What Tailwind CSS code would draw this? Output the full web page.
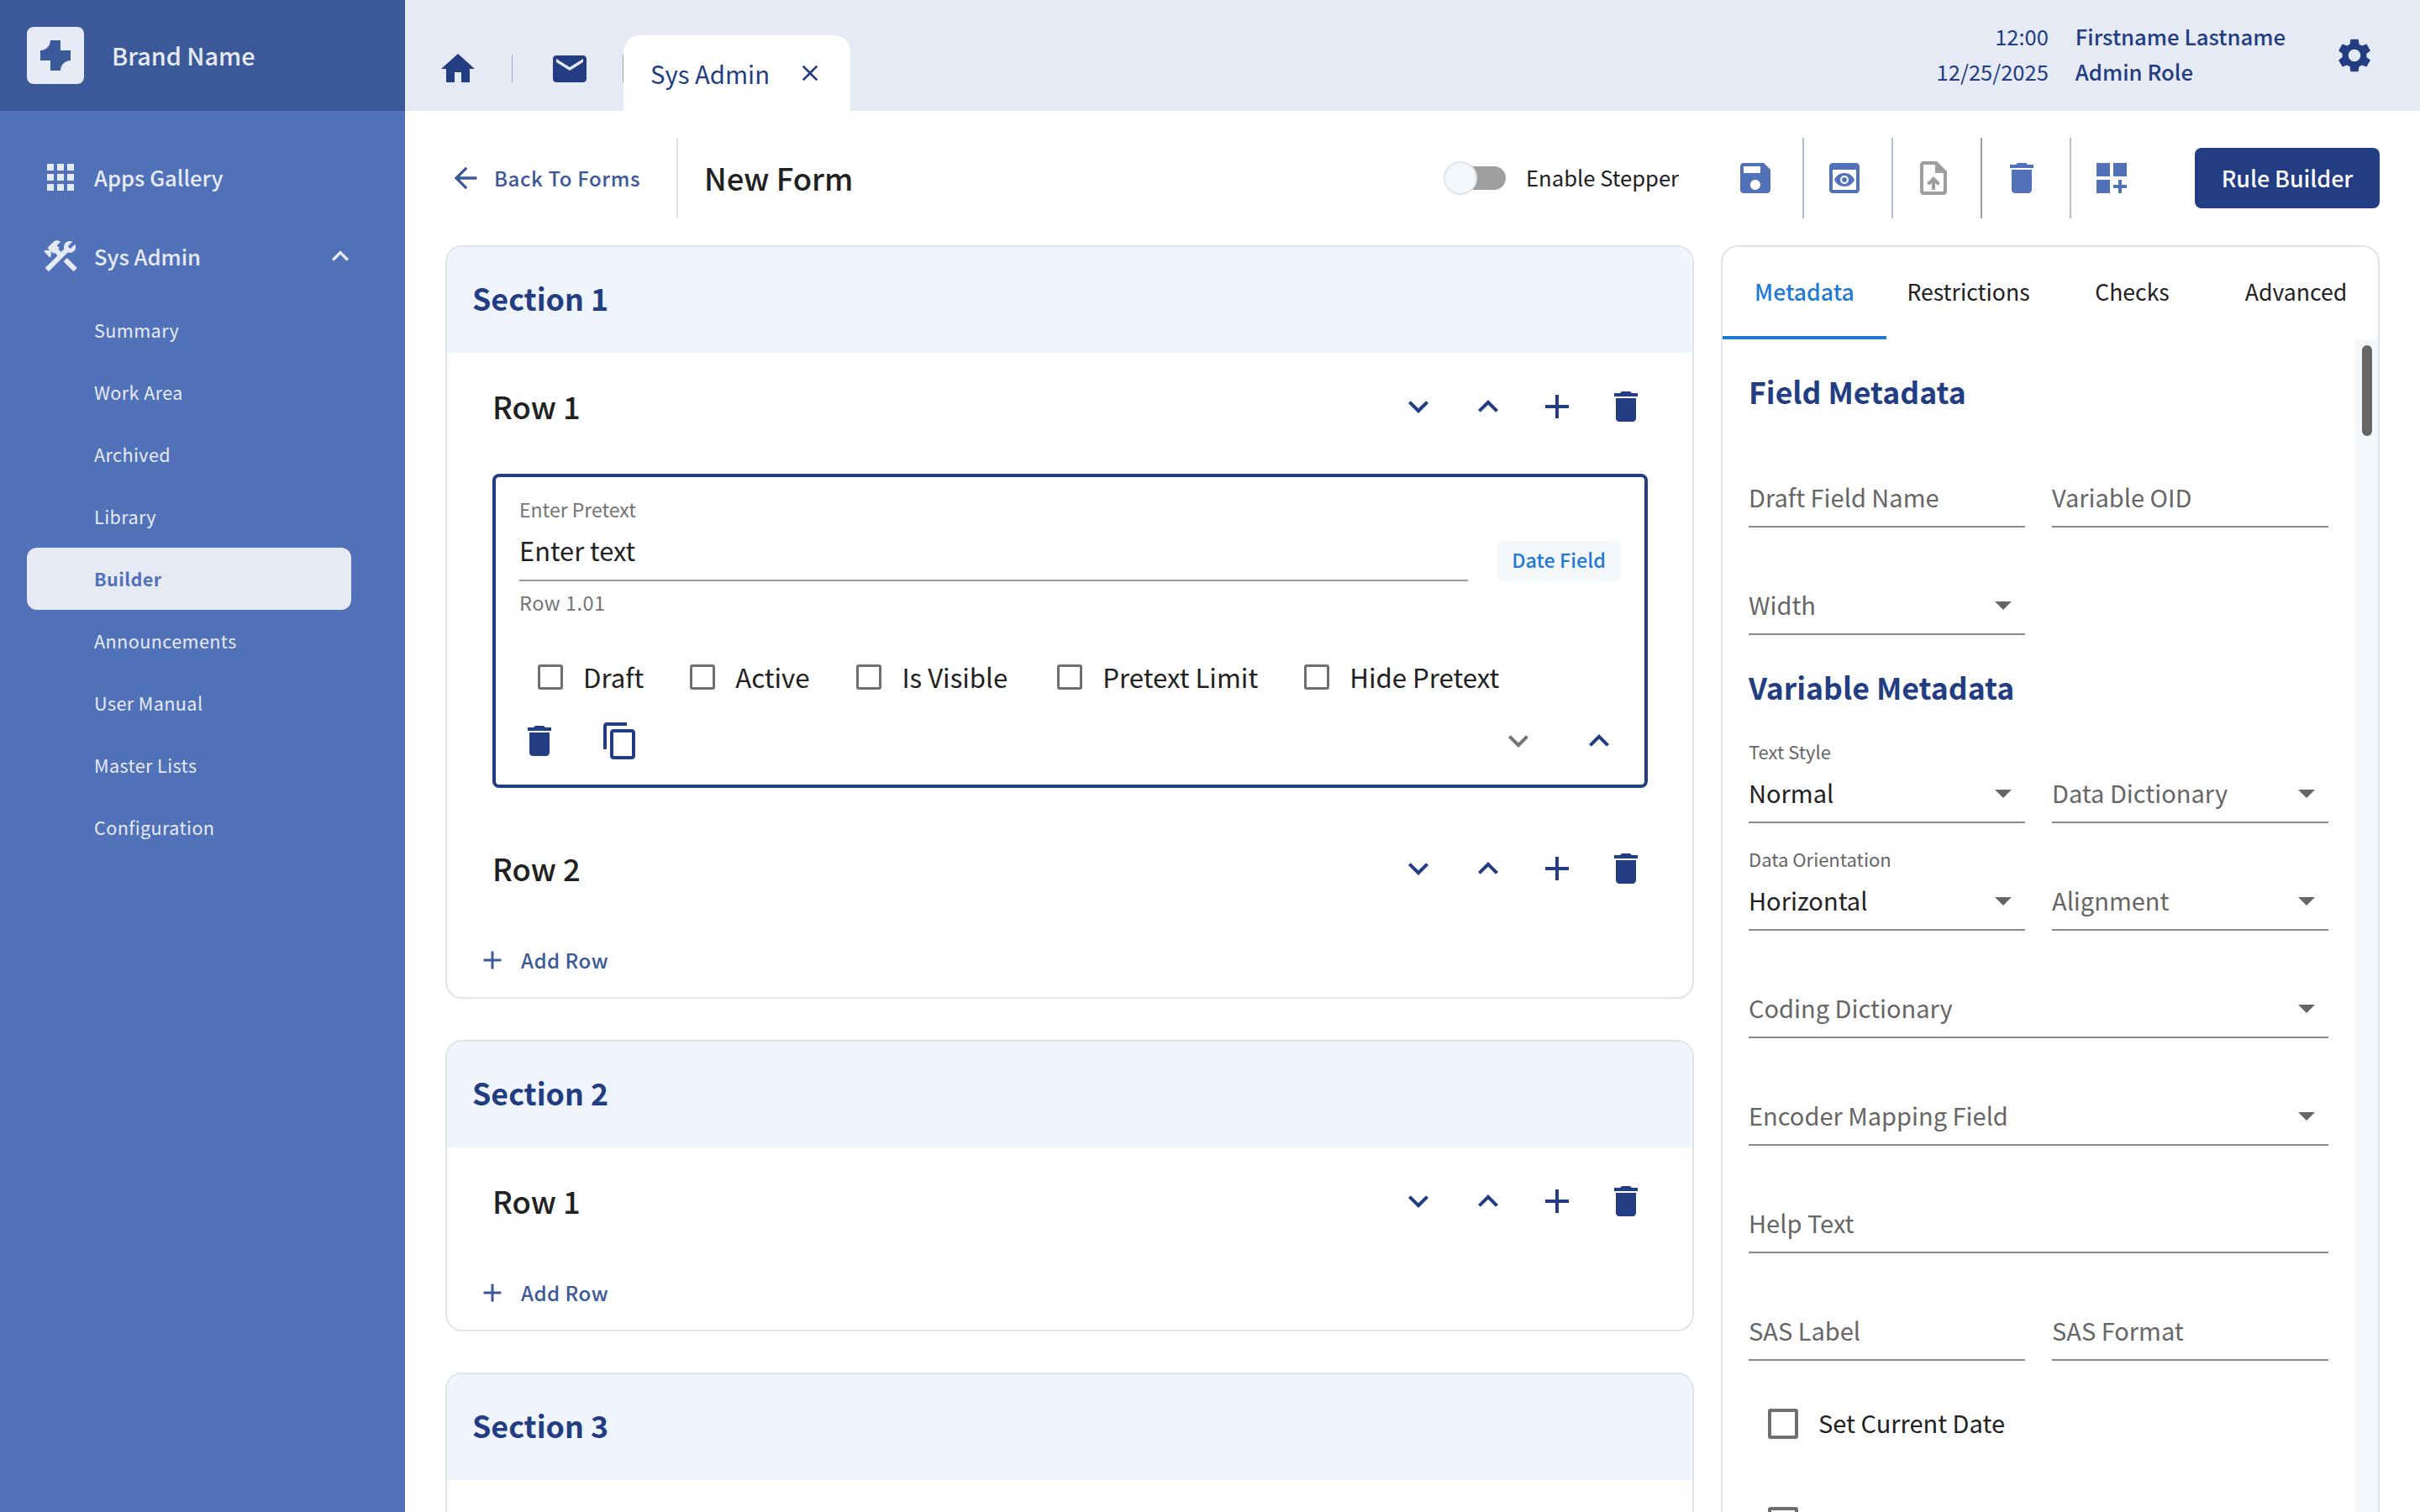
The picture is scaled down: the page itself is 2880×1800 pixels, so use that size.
<!DOCTYPE html>
<html lang="en">

<head>
    <meta charset="UTF-8">
    <title>New Form</title>
    <script src="https://cdn.jsdelivr.net/npm/@tailwindcss/browser@4"></script>
</head>

<body class="bg-white font-['Noto_Sans_CJK_SC',sans-serif] text-[#212121]">
    <!-- shared icons -->
    <svg class="hidden">
        <symbol id="i-down" viewBox="0 0 24 24"><path d="M16.59 8.59L12 13.17 7.41 8.59 6 10l6 6 6-6z"/></symbol>
        <symbol id="i-up" viewBox="0 0 24 24"><path d="M12 8l-6 6 1.41 1.41L12 10.83l4.59 4.58L18 14z"/></symbol>
        <symbol id="i-plus" viewBox="0 0 24 24"><path d="M19 13h-6v6h-2v-6H5v-2h6V5h2v6h6v2z"/></symbol>
        <symbol id="i-trash" viewBox="0 0 24 24"><path d="M6 19c0 1.1.9 2 2 2h8c1.1 0 2-.9 2-2V7H6v12zM19 4h-3.5l-1-1h-5l-1 1H5v2h14V4z"/></symbol>
        <symbol id="i-drop" viewBox="0 0 24 24"><path d="M7 10l5 5 5-5z"/></symbol>
    </svg>

    <div class="flex h-[1800px] w-[2880px] overflow-hidden">
        <!-- Sidebar -->
        <aside class="w-[482px] shrink-0 bg-[#5171b8] text-[#e6eaf5]">
            <div class="flex h-[132px] items-center gap-[33px] bg-[#3b5998] pl-[32px]">
                <div class="flex h-[68px] w-[68px] items-center justify-center rounded-[8px] bg-[#e6eaf5]">
                    <svg class="h-[36px] w-[36px] fill-[#3b5998]" viewBox="0 0 36 36"><path d="M0 12A12 12 0 0 0 12 0H24V12H36V24A12 12 0 0 0 24 36H12V24H0Z"/></svg>
                </div>
                <span class="text-[28.8px] leading-[40px] font-medium">Brand Name</span>
            </div>
            <nav class="pt-[40px]">
                <div class="flex h-[78px] items-center gap-[16px] pl-[48px]">
                    <svg class="h-[48px] w-[48px] fill-current" viewBox="0 0 24 24"><path d="M4 8h4V4H4v4zm6 12h4v-4h-4v4zm-6 0h4v-4H4v4zm0-6h4v-4H4v4zm6 0h4v-4h-4v4zm6-10v4h4V4h-4zm-6 4h4V4h-4v4zm6 6h4v-4h-4v4zm0 6h4v-4h-4v4z"/></svg>
                    <span class="text-[25.6px] leading-[36px] font-medium">Apps Gallery</span>
                </div>
                <div class="mt-[16px] flex h-[78px] items-center gap-[16px] pl-[48px]">
                    <svg class="h-[48px] w-[48px] fill-current" viewBox="0 0 24 24"><path d="M13.783 15.172l2.121-2.121 5.996 5.996-2.121 2.121zM17.5 10c1.93 0 3.5-1.57 3.5-3.5 0-.58-.16-1.12-.41-1.6l-2.7 2.7-1.49-1.49 2.7-2.7c-.48-.25-1.02-.41-1.6-.41C15.57 3 14 4.57 14 6.5c0 .41.08.8.21 1.16l-1.85 1.85-1.78-1.78.71-.71-1.41-1.41L12 3.49c-1.17-1.17-3.07-1.17-4.24 0L4.22 7.03l1.41 1.41H2.81l-.71.71 3.54 3.54.71-.71V9.15l1.41 1.41.71-.71 1.78 1.78-7.41 7.41 2.12 2.12L16.34 9.79c.36.13.75.21 1.16.21z"/></svg>
                    <span class="w-[127px] text-[25.6px] leading-[36px] font-medium whitespace-nowrap">Sys Admin</span>
                    <svg class="ml-[130px] h-[40px] w-[40px] fill-current" viewBox="0 0 24 24"><use href="#i-up"/></svg>
                </div>
                <ul class="mt-[12px] text-[21.6px] tracking-[0.4px]">
                    <li class="flex h-[74px] items-center pl-[112px]">Summary</li>
                    <li class="flex h-[74px] items-center pl-[112px]">Work Area</li>
                    <li class="flex h-[74px] items-center pl-[112px]">Archived</li>
                    <li class="flex h-[74px] items-center pl-[112px]">Library</li>
                    <li class="ml-[32px] flex h-[74px] w-[386px] items-center rounded-[12px] bg-[#e6eaf5] pl-[80px] font-bold text-[#5171b8]">Builder</li>
                    <li class="flex h-[74px] items-center pl-[112px]">Announcements</li>
                    <li class="flex h-[74px] items-center pl-[112px]">User Manual</li>
                    <li class="flex h-[74px] items-center pl-[112px]">Master Lists</li>
                    <li class="flex h-[74px] items-center pl-[112px]">Configuration</li>
                </ul>
            </nav>
        </aside>

        <main class="flex min-w-0 flex-1 flex-col">
            <!-- Header -->
            <header class="flex h-[132px] shrink-0 items-end bg-[#e6eaf5] text-[#223d82]">
                <svg class="mb-[26px] ml-[39px] h-[48px] w-[48px] fill-current" viewBox="0 0 24 24"><path d="M10 20v-6h4v6h5v-8h3L12 3 2 12h3v8z"/></svg>
                <div class="mb-[34px] ml-[40px] h-[33px] w-px bg-[#9aa6c4]"></div>
                <svg class="mb-[26px] ml-[44px] h-[48px] w-[48px] fill-current" viewBox="0 0 24 24"><path d="M20 4H4c-1.1 0-1.99.9-1.99 2L2 18c0 1.1.9 2 2 2h16c1.1 0 2-.9 2-2V6c0-1.1-.9-2-2-2zm0 4l-8 5-8-5V6l8 5 8-5v2z"/></svg>
                <div class="mb-[34px] ml-[39px] h-[33px] w-px bg-[#9aa6c4]"></div>
                <div class="flex h-[90px] w-[270px] items-center rounded-t-[20px] bg-white pl-[32px]">
                    <span class="text-[29.3px] leading-[44px]">Sys Admin</span>
                    <svg class="ml-[32px] h-[32px] w-[32px] fill-current" viewBox="0 0 24 24"><path d="M19 6.41L17.59 5 12 10.59 6.41 5 5 6.41 10.59 12 5 17.59 6.41 19 12 13.41 17.59 19 19 17.59 13.41 12z"/></svg>
                </div>
                <div class="ml-auto flex h-[132px] items-center">
                    <div class="mb-[4px] text-right text-[25.5px] leading-[42px]">
                        <div>12:00</div>
                        <div>12/25/2025</div>
                    </div>
                    <div class="mb-[4px] ml-[32px] text-[25.7px] leading-[42px] font-medium">
                        <div>Firstname Lastname</div>
                        <div>Admin Role</div>
                    </div>
                    <svg class="mr-[54px] ml-[58px] h-[48px] w-[48px] fill-current" viewBox="0 0 24 24"><path d="M19.14 12.94c.04-.3.06-.61.06-.94 0-.32-.02-.64-.07-.94l2.03-1.58c.18-.14.23-.41.12-.61l-1.92-3.32c-.12-.22-.37-.29-.59-.22l-2.39.96c-.5-.38-1.03-.7-1.62-.94l-.36-2.54c-.04-.24-.24-.41-.48-.41h-3.84c-.24 0-.43.17-.47.41l-.36 2.54c-.59.24-1.13.57-1.62.94l-2.39-.96c-.22-.08-.47 0-.59.22L2.74 8.87c-.12.21-.08.47.12.61l2.03 1.58c-.05.3-.09.63-.09.94s.02.64.07.94l-2.03 1.58c-.18.14-.23.41-.12.61l1.92 3.32c.12.22.37.29.59.22l2.39-.96c.5.38 1.03.7 1.62.94l.36 2.54c.05.24.24.41.48.41h3.84c.24 0 .44-.17.47-.41l.36-2.54c.59-.24 1.13-.56 1.62-.94l2.39.96c.22.08.47 0 .59-.22l1.92-3.32c.12-.22.07-.47-.12-.61l-2.01-1.58zM12 15.6c-1.98 0-3.6-1.62-3.6-3.6s1.62-3.6 3.6-3.6 3.6 1.62 3.6 3.6-1.62 3.6-3.6 3.6z"/></svg>
                </div>
            </header>

            <!-- Toolbar -->
            <div class="flex h-[160px] shrink-0 items-center pr-[48px] pl-[52px]">
                <svg class="h-[40px] w-[40px] fill-[#3b5998]" viewBox="0 0 24 24"><path d="M20 11H7.83l5.59-5.59L12 4l-8 8 8 8 1.41-1.41L7.83 13H20v-2z"/></svg>
                <span class="ml-[14px] w-[172px] text-[24px] leading-[32px] font-medium tracking-[0.6px] whitespace-nowrap text-[#3b5998]">Back To Forms</span>
                <div class="ml-[45px] h-[96px] w-[2px] bg-[#e0e0e0]"></div>
                <h1 class="ml-[31px] pb-[2px] text-[36.4px] leading-[50px] font-medium">New Form</h1>

                <div class="ml-auto flex items-center">
                    <div class="relative h-[40px] w-[74px]">
                        <div class="absolute top-[6px] right-0 h-[28px] w-[60px] rounded-full bg-[#9e9e9e]"></div>
                        <div class="absolute top-0 left-0 h-[40px] w-[40px] rounded-full border-2 border-[#e0e4e8] bg-[#f5f8fa]"></div>
                    </div>
                    <span class="ml-[24px] pb-[3px] text-[25.6px] leading-[40px]">Enable Stepper</span>
                    <svg class="ml-[67px] h-[48px] w-[48px] fill-[#5171b8]" viewBox="0 0 24 24"><path d="M17 3H5c-1.11 0-2 .9-2 2v14c0 1.1.89 2 2 2h14c1.1 0 2-.9 2-2V7l-4-4zm-5 16c-1.66 0-3-1.34-3-3s1.34-3 3-3 3 1.34 3 3-1.34 3-3 3zm3-10H5V5h10v4z"/></svg>
                    <div class="ml-[32px] h-[96px] w-[2px] bg-[#b4bdd3]"></div>
                    <svg class="ml-[24px] h-[48px] w-[48px] fill-[#5171b8]" viewBox="0 0 24 24"><path d="M19 3H5c-1.11 0-2 .9-2 2v14c0 1.1.89 2 2 2h14c1.1 0 2-.9 2-2V5c0-1.1-.9-2-2-2zm0 16H5V7h14v12zm-5.5-6c0 .83-.67 1.5-1.5 1.5s-1.5-.67-1.5-1.5.67-1.5 1.5-1.5 1.5.67 1.5 1.5zM12 9c-2.73 0-5.06 1.66-6 4 .94 2.34 3.27 4 6 4s5.06-1.66 6-4c-.94-2.34-3.27-4-6-4zm0 6.5c-1.38 0-2.5-1.12-2.5-2.5s1.12-2.5 2.5-2.5 2.5 1.12 2.5 2.5-1.12 2.5-2.5 2.5z"/></svg>
                    <div class="ml-[32px] h-[96px] w-[2px] bg-[#b4bdd3]"></div>
                    <svg class="ml-[24px] h-[48px] w-[48px] fill-[#9e9e9e]" viewBox="0 0 24 24"><path d="M14 2H6c-1.1 0-1.99.9-1.99 2L4 20c0 1.1.89 2 1.99 2H18c1.1 0 2-.9 2-2V8l-6-6zm4 18H6V4h7v5h5v11zM8 15.01l1.41 1.41L11 14.84V19h2v-4.16l1.59 1.59L16 15.01 12.01 11 8 15.01z"/></svg>
                    <div class="ml-[32px] h-[96px] w-[2px] bg-[#9e9e9e]"></div>
                    <svg class="ml-[23px] h-[48px] w-[48px] fill-[#5171b8]"><use href="#i-trash"/></svg>
                    <div class="ml-[33px] h-[96px] w-[2px] bg-[#b4bdd3]"></div>
                    <svg class="ml-[24px] h-[48px] w-[48px] fill-[#5171b8]" viewBox="0 0 24 24"><path d="M3 3h8v8H3zm10 0h8v8h-8zM3 13h8v8H3zm15 0h-2v3h-3v2h3v3h2v-3h3v-2h-3z"/></svg>
                    <button class="ml-[75px] flex h-[72px] w-[220px] items-center justify-center rounded-[8px] bg-[#223d82] text-[26.8px] font-medium text-white">Rule Builder</button>
                </div>
            </div>

            <div class="flex items-start gap-[32px] pl-[48px]">
                <!-- Sections -->
                <div class="flex w-[1486px] shrink-0 flex-col gap-[49px]">
                    <section class="overflow-hidden rounded-[20px] border-2 border-[#dfe3ea]">
                        <h2 class="flex h-[126px] items-center bg-[#f0f4fc] pb-[5px] pl-[30px] text-[35.8px] font-semibold text-[#223d82]">Section 1</h2>
                        <div class="flex h-[128px] items-center justify-between pr-[55px] pl-[54px]">
                            <h3 class="pb-[2px] text-[36.4px] leading-[50px] font-medium">Row 1</h3>
                            <div class="flex gap-[34.2px] fill-[#223d82]">
                                <svg class="h-[48px] w-[48px]"><use href="#i-down"/></svg>
                                <svg class="h-[48px] w-[48px]"><use href="#i-up"/></svg>
                                <svg class="h-[48px] w-[48px]"><use href="#i-plus"/></svg>
                                <svg class="h-[48px] w-[48px]"><use href="#i-trash"/></svg>
                            </div>
                        </div>

                        <!-- Selected field -->
                        <div class="mt-[16px] mr-[53px] ml-[54px] h-[374px] rounded-[8px] border-4 border-[#223d82] px-[28px]">
                            <div class="flex items-end">
                                <div class="w-[1130px] border-b-2 border-[#999999] pt-[22px]">
                                    <div class="text-[23px] leading-[32px] text-[#757575]">Enter Pretext</div>
                                    <div class="mt-[2px] h-[66px] text-[30.8px] leading-[62px]">Enter text</div>
                                </div>
                                <div class="ml-[34px] flex h-[48px] w-[148px] items-center justify-center rounded-[8px] bg-[#f5f8fa] pb-[2px] text-[23.4px] font-medium text-[#1f7ad6]">Date Field</div>
                            </div>
                            <div class="mt-[9px] text-[23.5px] leading-[32px] tracking-[0.5px] text-[#757575]">Row 1.01</div>
                            <div class="mt-[53px] flex h-[40px] items-center pl-[22px] text-[31.2px]">
                                <span class="h-[30px] w-[30px] rounded-[3px] border-[3px] border-[#6f6f6f]"></span>
                                <span class="ml-[24px]">Draft</span>
                                <span class="ml-[55px] h-[30px] w-[30px] rounded-[3px] border-[3px] border-[#6f6f6f]"></span>
                                <span class="ml-[24px]">Active</span>
                                <span class="ml-[56px] h-[30px] w-[30px] rounded-[3px] border-[3px] border-[#6f6f6f]"></span>
                                <span class="ml-[24px]">Is Visible</span>
                                <span class="ml-[59px] h-[30px] w-[30px] rounded-[3px] border-[3px] border-[#6f6f6f]"></span>
                                <span class="ml-[24px]">Pretext Limit</span>
                                <span class="ml-[55px] h-[30px] w-[30px] rounded-[3px] border-[3px] border-[#6f6f6f]"></span>
                                <span class="ml-[24px]">Hide Pretext</span>
                            </div>
                            <div class="mt-[32px] flex items-center">
                                <svg class="h-[48px] w-[48px] fill-[#223d82]"><use href="#i-trash"/></svg>
                                <svg class="ml-[48px] h-[48px] w-[48px] fill-[#223d82]" viewBox="0 0 24 24"><path d="M16 1H4c-1.1 0-2 .9-2 2v14h2V3h12V1zm3 4H8c-1.1 0-2 .9-2 2v14c0 1.1.9 2 2 2h11c1.1 0 2-.9 2-2V7c0-1.1-.9-2-2-2zm0 16H8V7h11v14z"/></svg>
                                <svg class="ml-auto h-[48px] w-[48px] fill-[#757575]"><use href="#i-down"/></svg>
                                <svg class="mr-[2px] ml-[48px] h-[48px] w-[48px] fill-[#223d82]"><use href="#i-up"/></svg>
                            </div>
                        </div>

                        <div class="mt-[32px] flex h-[128px] items-center justify-between pr-[55px] pl-[54px]">
                            <h3 class="pb-[2px] text-[36.4px] leading-[50px] font-medium">Row 2</h3>
                            <div class="flex gap-[34.2px] fill-[#223d82]">
                                <svg class="h-[48px] w-[48px]"><use href="#i-down"/></svg>
                                <svg class="h-[48px] w-[48px]"><use href="#i-up"/></svg>
                                <svg class="h-[48px] w-[48px]"><use href="#i-plus"/></svg>
                                <svg class="h-[48px] w-[48px]"><use href="#i-trash"/></svg>
                            </div>
                        </div>
                        <div class="flex h-[89px] items-center pl-[36px] text-[#3b5998]">
                            <svg class="h-[36px] w-[36px] fill-current"><use href="#i-plus"/></svg>
                            <span class="ml-[16px] text-[24px] font-medium tracking-[0.5px]">Add Row</span>
                        </div>
                    </section>

                    <section class="overflow-hidden rounded-[20px] border-2 border-[#dfe3ea]">
                        <h2 class="flex h-[126px] items-center bg-[#f0f4fc] pb-[5px] pl-[30px] text-[35.8px] font-semibold text-[#223d82]">Section 2</h2>
                        <div class="flex h-[128px] items-center justify-between pr-[55px] pl-[54px]">
                            <h3 class="pb-[2px] text-[36.4px] leading-[50px] font-medium">Row 1</h3>
                            <div class="flex gap-[34.2px] fill-[#223d82]">
                                <svg class="h-[48px] w-[48px]"><use href="#i-down"/></svg>
                                <svg class="h-[48px] w-[48px]"><use href="#i-up"/></svg>
                                <svg class="h-[48px] w-[48px]"><use href="#i-plus"/></svg>
                                <svg class="h-[48px] w-[48px]"><use href="#i-trash"/></svg>
                            </div>
                        </div>
                        <div class="flex h-[89px] items-center pl-[36px] text-[#3b5998]">
                            <svg class="h-[36px] w-[36px] fill-current"><use href="#i-plus"/></svg>
                            <span class="ml-[16px] text-[24px] font-medium tracking-[0.5px]">Add Row</span>
                        </div>
                    </section>

                    <section class="h-[400px] overflow-hidden rounded-[20px] border-2 border-[#dfe3ea]">
                        <h2 class="flex h-[126px] items-center bg-[#f0f4fc] pb-[5px] pl-[30px] text-[35.8px] font-semibold text-[#223d82]">Section 3</h2>
                    </section>
                </div>

                <!-- Metadata panel -->
                <div class="h-[1600px] w-[784px] shrink-0 overflow-hidden rounded-[20px] border-2 border-[#e0e4e8]">
                    <div class="flex h-[110px] text-[26.6px]">
                        <div class="flex w-[196px] items-center justify-center border-b-4 border-[#1f7ad6] font-medium text-[#1f7ad6]">Metadata</div>
                        <div class="flex w-[196px] items-center justify-center border-b-4 border-transparent">Restrictions</div>
                        <div class="flex w-[196px] items-center justify-center border-b-4 border-transparent">Checks</div>
                        <div class="flex w-[196px] items-center justify-center border-b-4 border-transparent">Advanced</div>
                    </div>
                    <div class="flex">
                        <div class="w-[753px] shrink-0 pr-[32px] pl-[31px]">
                            <h2 class="mt-[32px] h-[64px] text-[35.6px] leading-[60px] font-semibold text-[#223d82]">Field Metadata</h2>
                            <div class="grid grid-cols-2 gap-x-[32px] text-[29px] text-[#666666]">
                                <div class="flex h-[128px] flex-col justify-end"><div class="flex h-[68px] items-center border-b-2 border-[#8a8a8a] pb-[3px]">Draft Field Name</div></div>
                                <div class="flex h-[128px] flex-col justify-end"><div class="flex h-[68px] items-center border-b-2 border-[#8a8a8a] pb-[3px]">Variable OID</div></div>
                                <div class="flex h-[128px] flex-col justify-end"><div class="flex h-[68px] items-center justify-between border-b-2 border-[#8a8a8a] pb-[3px]">Width<svg class="mr-[2px] h-[48px] w-[48px] fill-[#666666]"><use href="#i-drop"/></svg></div></div>
                            </div>
                            <h2 class="mt-[32px] h-[64px] text-[35.6px] leading-[60px] font-semibold text-[#223d82]">Variable Metadata</h2>
                            <div class="grid grid-cols-2 gap-x-[32px] text-[29px] text-[#666666]">
                                <div class="flex h-[128px] flex-col justify-end">
                                    <div class="h-[32px] text-[22px] leading-[28px]">Text Style</div>
                                    <div class="flex h-[68px] items-center justify-between border-b-2 border-[#8a8a8a] pb-[3px] text-[#212121]">Normal<svg class="mr-[2px] h-[48px] w-[48px] fill-[#666666]"><use href="#i-drop"/></svg></div>
                                </div>
                                <div class="flex h-[128px] flex-col justify-end"><div class="flex h-[68px] items-center justify-between border-b-2 border-[#8a8a8a] pb-[3px]">Data Dictionary<svg class="mr-[2px] h-[48px] w-[48px] fill-[#666666]"><use href="#i-drop"/></svg></div></div>
                                <div class="flex h-[128px] flex-col justify-end">
                                    <div class="h-[32px] text-[22px] leading-[28px]">Data Orientation</div>
                                    <div class="flex h-[68px] items-center justify-between border-b-2 border-[#8a8a8a] pb-[3px] text-[#212121]">Horizontal<svg class="mr-[2px] h-[48px] w-[48px] fill-[#666666]"><use href="#i-drop"/></svg></div>
                                </div>
                                <div class="flex h-[128px] flex-col justify-end"><div class="flex h-[68px] items-center justify-between border-b-2 border-[#8a8a8a] pb-[3px]">Alignment<svg class="mr-[2px] h-[48px] w-[48px] fill-[#666666]"><use href="#i-drop"/></svg></div></div>
                                <div class="col-span-2 flex h-[128px] flex-col justify-end"><div class="flex h-[68px] items-center justify-between border-b-2 border-[#8a8a8a] pb-[3px]">Coding Dictionary<svg class="mr-[2px] h-[48px] w-[48px] fill-[#666666]"><use href="#i-drop"/></svg></div></div>
                                <div class="col-span-2 flex h-[128px] flex-col justify-end"><div class="flex h-[68px] items-center justify-between border-b-2 border-[#8a8a8a] pb-[3px]">Encoder Mapping Field<svg class="mr-[2px] h-[48px] w-[48px] fill-[#666666]"><use href="#i-drop"/></svg></div></div>
                                <div class="col-span-2 flex h-[128px] flex-col justify-end"><div class="flex h-[68px] items-center border-b-2 border-[#8a8a8a] pb-[3px]">Help Text</div></div>
                                <div class="flex h-[128px] flex-col justify-end"><div class="flex h-[68px] items-center border-b-2 border-[#8a8a8a] pb-[3px]">SAS Label</div></div>
                                <div class="flex h-[128px] flex-col justify-end"><div class="flex h-[68px] items-center border-b-2 border-[#8a8a8a] pb-[3px]">SAS Format</div></div>
                            </div>
                            <div class="mt-[16px] flex h-[117px] items-center pl-[23px] text-[29px]">
                                <span class="h-[36px] w-[36px] rounded-[3px] border-4 border-[#6f6f6f]"></span>
                                <span class="ml-[24px] pb-[2px]">Set Current Date</span>
                            </div>
                            <div class="flex h-[117px] items-center pl-[23px]">
                                <span class="h-[36px] w-[36px] rounded-[3px] border-4 border-[#6f6f6f]"></span>
                            </div>
                        </div>
                        <!-- scrollbar -->
                        <div class="h-[1490px] w-[27px] shrink-0 bg-[#f5f8fa] pt-[7px] pl-[8px]">
                            <div class="h-[108px] w-[12px] rounded-full bg-[#666666]"></div>
                        </div>
                    </div>
                </div>
            </div>
        </main>
    </div>
</body>

</html>
